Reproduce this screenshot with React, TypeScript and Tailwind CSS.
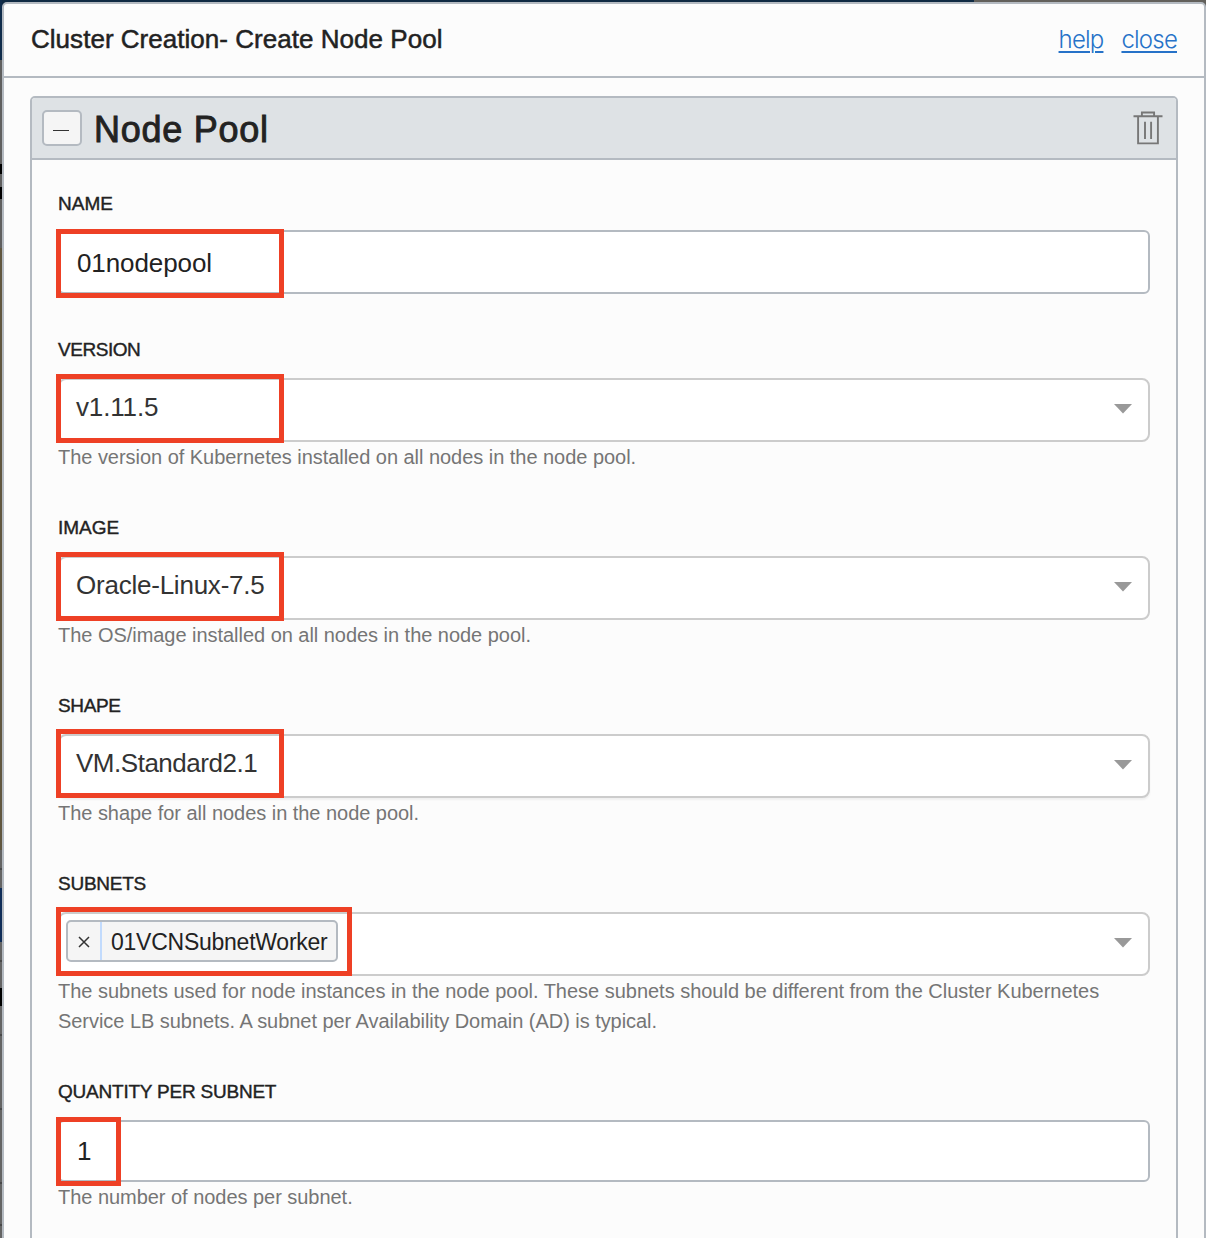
import type { ReactNode } from "react";

function Highlight({ className }: { className: string }) {
  return <div className={`pointer-events-none absolute -left-[4px] h-[69px] border-[5px] border-[#ee4025] ${className}`} />;
}

function Label({ children, className = "" }: { children: ReactNode; className?: string }) {
  return (
    <div className={`h-[30px] pt-px leading-[30px] text-[19px] whitespace-nowrap text-[#222] [-webkit-text-stroke:0.4px_#222] ${className}`}>
      <span>{children}</span>
    </div>
  );
}

function Help({ children }: { children: ReactNode }) {
  return <div className="text-[20px] leading-[30px] tracking-[-0.035px] whitespace-nowrap text-[#757575]">{children}</div>;
}

function Select({ children, className = "" }: { children: ReactNode; className?: string }) {
  return (
    <div className={`relative mt-[14px] flex h-16 items-center justify-between rounded-[8px] border-2 border-[#ccc] bg-white pr-4 ${className}`}>
      {children}
      <svg width="18" height="10" viewBox="0 0 18 10" className="mb-[2px] shrink-0">
        <path d="M0 0H18L9 9.5Z" fill="#999" />
      </svg>
    </div>
  );
}

const valueText = "pb-[6px] pl-4 text-[26px] leading-[30px] whitespace-nowrap text-[#333]";

export default function App() {
  return (
    <div className="flex h-[1238px] w-[1206px] overflow-hidden bg-[linear-gradient(90deg,#102a43_0px,#102a43_974px,#62605b_974px)] font-['Liberation_Sans',Arial,sans-serif]">
      <div className="flex w-[2px] shrink-0 flex-col">
        <div className="h-[60px] bg-[#102c4b]" />
        <div className="h-[104px] bg-[#5f5f5f]" />
        <div className="h-[10px] bg-black" />
        <div className="h-[13px] bg-[#5f5f5f]" />
        <div className="h-[12px] bg-black" />
        <div className="h-[49px] bg-[#5f5f5f]" />
        <div className="h-[602px] bg-[#60563f]" />
        <div className="h-[18px] bg-[#646464]" />
        <div className="h-[2px] bg-[#484848]" />
        <div className="h-[18px] bg-[#646464]" />
        <div className="h-[54px] bg-[#0f2d58]" />
        <div className="h-[18px] bg-[#646464]" />
        <div className="h-[2px] bg-[#484848]" />
        <div className="h-[26px] bg-[#646464]" />
        <div className="h-[18px] bg-black" />
        <div className="h-[28px] bg-[#646464]" />
        <div className="h-[2px] bg-[#484848]" />
        <div className="h-[72px] bg-[#646464]" />
        <div className="h-[2px] bg-[#484848]" />
        <div className="h-[72px] bg-[#646464]" />
        <div className="h-[2px] bg-[#484848]" />
        <div className="h-[40px] bg-[#646464]" />
        <div className="h-[2px] bg-[#484848]" />
        <div className="flex-1 bg-[#646464]" />
      </div>
      <div className="mt-[2px] h-[1260px] w-[1204px] shrink-0 rounded-[5px] border-2 border-[#b4bac1] bg-[#fcfcfc]">
        <header className="flex h-[74px] items-center justify-between border-b-2 border-[#b4bac1] px-[27px]">
          <h1 className="pb-[2px] text-[26px] leading-[30px] tracking-[0.03px] whitespace-nowrap text-[#222] [-webkit-text-stroke:0.5px_#222]">Cluster Creation- Create Node Pool</h1>
          <nav className="flex gap-[18px] font-['Inter'] text-[24px] leading-[30px] font-light tracking-[-0.8px] text-[#2672c8]">
            <a className="underline decoration-2 underline-offset-[3px]">help</a>
            <a className="underline decoration-2 underline-offset-[3px]">close</a>
          </nav>
        </header>

        <section className="mx-[26px] mt-[18px] h-[1200px] rounded-[5px] border-2 border-[#b4bac1]">
          <div className="flex h-[62px] items-center rounded-t-[3px] border-b-2 border-[#b4bac1] bg-[#dee2e5] pr-[13px] pl-[10px]">
            <button className="flex h-9 w-10 items-center justify-center rounded-[5px] border-2 border-[#b4bac1] bg-[#f5f5f5]">
              <span className="mt-[5px] mr-[2px] h-px w-4 bg-[#333]" />
            </button>
            <h2 className="ml-3 pt-1 text-[36px] leading-[40px] tracking-[0.75px] whitespace-nowrap text-[#222] [-webkit-text-stroke:0.9px_#222]">Node Pool</h2>
            <svg className="ml-auto" width="30" height="34" viewBox="0 0 30 34" fill="none" stroke="#777" strokeWidth="1.9">
              <path d="M0.5 5.2H29.5M8.9 5V1.5H21.1V5M5.1 5V32.4H24.9V5M12 10.7V28M18.1 10.7V28" />
            </svg>
          </div>

          <div className="flex flex-col gap-10 px-[26px] pt-7">
            <div>
              <Label>NAME</Label>
              <div className="relative mt-3 flex h-16 items-center rounded-[6px] border-2 border-[#b4bac1] bg-white pl-[17px] text-[26px] leading-[30px] text-[#222]">
                <span className="pt-[2px] tracking-[-0.1px]">01nodepool</span>
                <Highlight className="-top-[3px] w-[228px]" />
              </div>
            </div>
            <div>
              <Label className="tracking-[-0.45px]">VERSION</Label>
              <Select>
                <span className={`${valueText} tracking-[-0.15px]`}>v1.11.5</span>
                <Highlight className="-top-[6px] w-[228px]" />
              </Select>
              <Help>The version of Kubernetes installed on all nodes in the node pool.</Help>
            </div>
            <div>
              <Label>IMAGE</Label>
              <Select>
                <span className={`${valueText} tracking-[-0.23px]`}>Oracle-Linux-7.5</span>
                <Highlight className="-top-[6px] w-[228px]" />
              </Select>
              <Help>The OS/image installed on all nodes in the node pool.</Help>
            </div>
            <div>
              <Label className="tracking-[-0.35px]">SHAPE</Label>
              <Select className="shadow-[0_2px_2px_#0000000d]">
                <span className={`${valueText} tracking-[-0.48px]`}>VM.Standard2.1</span>
                <Highlight className="-top-[7px] w-[228px]" />
              </Select>
              <Help>The shape for all nodes in the node pool.</Help>
            </div>
            <div>
              <Label className="tracking-[-0.25px]">SUBNETS</Label>
              <Select>
                <div className="mb-[6px] ml-[6px] flex h-[42px] w-[272px] rounded-[5px] border-2 border-[#b4bac1] bg-[#f5f5f5] text-[#222]">
                  <div className="flex w-[34px] shrink-0 items-center justify-center border-r-2 border-[#c2dbfd] pt-[2px]">
                    <svg width="12" height="12" viewBox="0 0 12 12" stroke="#333" strokeWidth="1.5"><path d="M1 1L11 11M11 1L1 11" /></svg>
                  </div>
                  <span className="pl-[9px] text-[23px] leading-[41px] tracking-[-0.25px] whitespace-nowrap">01VCNSubnetWorker</span>
                </div>
                <Highlight className="-top-[7px] w-[296px]" />
              </Select>
              <Help>
                <span className="block tracking-[-0.018px]">The subnets used for node instances in the node pool. These subnets should be different from the Cluster Kubernetes</span>
                <span className="block tracking-[-0.045px]">Service LB subnets. A subnet per Availability Domain (AD) is typical.</span>
              </Help>
            </div>
            <div>
              <Label className="tracking-[-0.22px]">QUANTITY PER SUBNET</Label>
              <div className="relative mt-[14px] flex h-[62px] items-center rounded-[6px] border-2 border-[#b4bac1] bg-white pl-[17px] text-[26px] leading-[30px] text-[#222]">
                <span>1</span>
                <Highlight className="-top-[5px] w-[65px]" />
              </div>
              <Help>The number of nodes per subnet.</Help>
            </div>
          </div>
        </section>
      </div>
    </div>
  );
}
